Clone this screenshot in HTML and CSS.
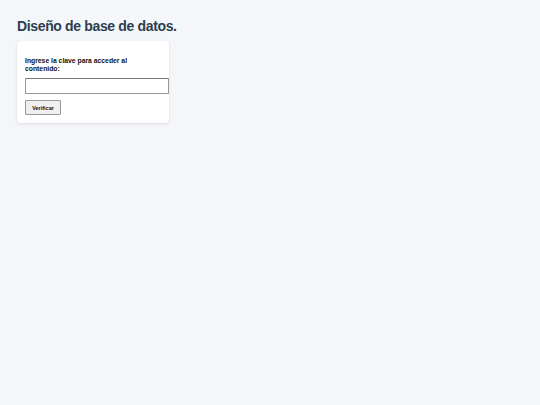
FILE: index.html
```html
<!DOCTYPE html>
<html lang="es">
<head>
<meta charset="utf-8">
<title>Diseño de base de datos.</title>
<link rel="stylesheet" href="styles.css">
</head>
<body>
<div class="page">
  <h1 class="title">Diseño de base de datos.</h1>
  <div class="card">
    <label class="label" for="clave">Ingrese la clave para acceder al contenido:</label>
    <input class="input" id="clave" type="password">
    <button class="btn" type="button">Verificar</button>
  </div>
</div>
</body>
</html>
```

FILE: styles.css
```css
html, body {
  margin: 0;
  padding: 0;
  background: #f4f6fa;
}
body {
  font-family: "Liberation Sans", Arial, sans-serif;
}
.page {
  padding: 18px 17px;
}
.title {
  margin: 0 0 6px 0;
  font-size: 14px;
  line-height: 17px;
  letter-spacing: -0.35px;
  font-weight: bold;
  color: #2c3e50;
}
.card {
  width: 136px;
  background: #ffffff;
  border-radius: 4px;
  box-shadow: 0 1px 3px rgba(0,0,0,0.12);
  padding: 16px 8px 8px 8px;
}
.label {
  display: block;
  font-size: 6.8px;
  line-height: 8px;
  font-weight: bold;
  color: #111;
  margin-bottom: 5px;
  padding-right: 4px;
}
.input {
  display: block;
  box-sizing: content-box;
  width: 100%;
  height: 14px;
  padding: 0 3px;
  margin: 0 0 6px 0;
  border: 1px solid #999;
  border-top-color: #777;
  border-radius: 1px;
  background: #fff;
  font-size: 7px;
}
.btn {
  display: block;
  height: 15px;
  width: 36px;
  padding: 0;
  font-family: "Liberation Sans", Arial, sans-serif;
  font-size: 5.5px;
  font-weight: bold;
  color: #111;
  background: #efefef;
  border: 1px solid #999;
  border-radius: 1px;
}
```
